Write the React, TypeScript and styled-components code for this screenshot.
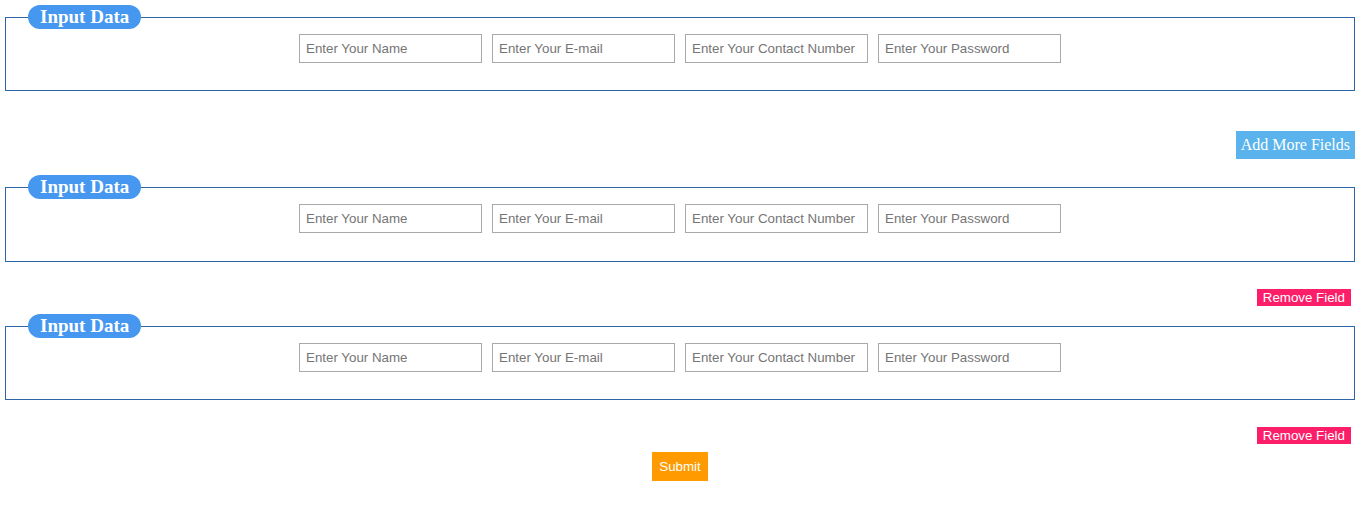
import React from "react";
import styled, { createGlobalStyle } from "styled-components";

const Global = createGlobalStyle`
  html, body { margin: 0; padding: 0; background: #fff; }
  body { font-family: "Liberation Serif", "Times New Roman", serif; }
`;

const Page = styled.form`
  width: 1350px;
  padding: 5px 0 0 5px;
  display: flex;
  flex-direction: column;
`;

const Fieldset = styled.fieldset`
  margin: 0;
  padding: 0;
  border: 1px solid #2d66a6;
  min-width: 0;
`;

const Legend = styled.legend`
  margin-left: 22px;
  padding: 0 12px;
  height: 24px;
  line-height: 24px;
  box-sizing: border-box;
  background: #4597f0;
  color: #fff;
  border-radius: 12px;
  font-family: "Liberation Serif", "Times New Roman", serif;
  font-weight: bold;
  font-size: 19px;
`;

const Row = styled.div<{ $bottom: number }>`
  display: flex;
  justify-content: center;
  gap: 10px;
  padding: 5px 0 ${(p) => p.$bottom}px;
`;

const Input = styled.input`
  box-sizing: border-box;
  width: 183px;
  height: 29px;
  margin: 0;
  padding: 0 6px;
  border: 1px solid #a9a9a9;
  font-family: "Liberation Sans", Arial, sans-serif;
  font-size: 13.333px;
  color: #333;
  &::placeholder { color: #757575; }
`;

const ActionRow = styled.div<{ $top: number; $bottom: number; $right?: number; $center?: boolean }>`
  display: flex;
  justify-content: ${(p) => (p.$center ? "center" : "flex-end")};
  padding-top: ${(p) => p.$top}px;
  padding-bottom: ${(p) => p.$bottom}px;
  padding-right: ${(p) => p.$right ?? 0}px;
`;

const AddButton = styled.button`
  box-sizing: border-box;
  height: 28px;
  padding: 0 5px;
  border: none;
  background: #5ab3ec;
  color: #fff;
  font-family: "Liberation Serif", "Times New Roman", serif;
  font-size: 16px;
  cursor: pointer;
`;

const RemoveButton = styled.button`
  box-sizing: border-box;
  height: 17px;
  padding: 0 6px;
  border: none;
  background: #fc1e69;
  color: #fff;
  font-family: "Liberation Sans", Arial, sans-serif;
  font-size: 13.333px;
  line-height: 17px;
  cursor: pointer;
`;

const SubmitButton = styled.button`
  box-sizing: border-box;
  width: 56px;
  height: 29px;
  padding: 0;
  border: none;
  background: #ff9a00;
  color: #fff;
  font-family: "Liberation Sans", Arial, sans-serif;
  font-size: 13.333px;
  cursor: pointer;
`;

const DataGroup = ({ bottom }: { bottom: number }) => (
  <Fieldset>
    <Legend>Input Data</Legend>
    <Row $bottom={bottom}>
      <Input type="text" placeholder="Enter Your Name" />
      <Input type="email" placeholder="Enter Your E-mail" />
      <Input type="text" placeholder="Enter Your Contact Number" />
      <Input type="password" placeholder="Enter Your Password" />
    </Row>
  </Fieldset>
);

export default function App() {
  return (
    <>
      <Global />
      <Page onSubmit={(e) => e.preventDefault()}>
        <DataGroup bottom={27} />
        <ActionRow $top={40} $bottom={16}>
          <AddButton type="button">Add More Fields</AddButton>
        </ActionRow>
        <DataGroup bottom={28} />
        <ActionRow $top={27} $bottom={8} $right={4}>
          <RemoveButton type="button">Remove Field</RemoveButton>
        </ActionRow>
        <DataGroup bottom={27} />
        <ActionRow $top={27} $bottom={8} $right={4}>
          <RemoveButton type="button">Remove Field</RemoveButton>
        </ActionRow>
        <ActionRow $top={0} $bottom={0} $center>
          <SubmitButton type="submit">Submit</SubmitButton>
        </ActionRow>
      </Page>
    </>
  );
}
